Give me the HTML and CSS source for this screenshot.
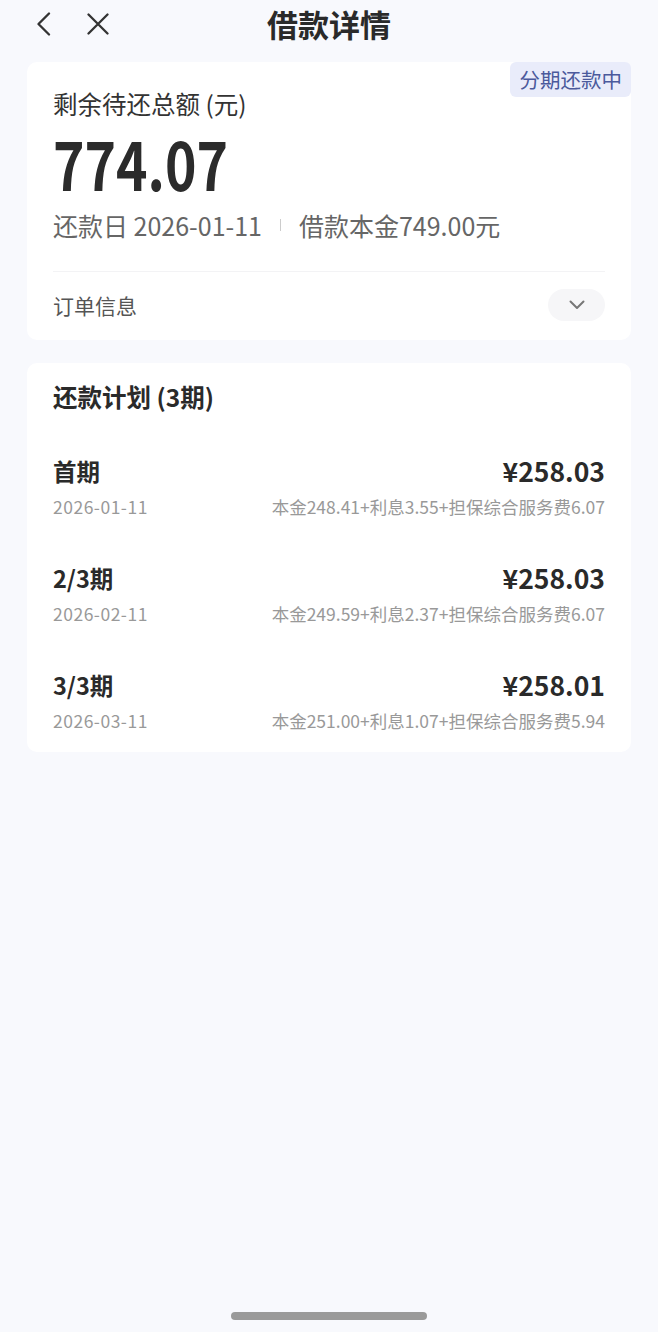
FILE: index.html
```html
<!DOCTYPE html>
<html lang="zh-CN">
<head>
  <meta charset="UTF-8" />
  <meta name="viewport" content="width=device-width, initial-scale=1.0"/>
  <title>借款详情</title>
  <link rel="stylesheet" href="styles.css">
</head>
<body>

  <!-- 顶部导航 -->
  <div class="nav">
    <div class="nav-left">
      <svg width="16" height="24" viewBox="0 0 16 24">
        <path d="M13 1.5 L2.5 12 L13 22.5" fill="none" stroke="#333" stroke-width="2.3" stroke-linecap="round" stroke-linejoin="round"/>
      </svg>
      <svg width="22" height="22" viewBox="0 0 22 22">
        <path d="M1.5 1.5 L20.5 20.5 M20.5 1.5 L1.5 20.5" fill="none" stroke="#333" stroke-width="2.3" stroke-linecap="round"/>
      </svg>
    </div>
    <h1 class="nav-title">借款详情</h1>
    <div></div>
  </div>

  <!-- 待还总额 -->
  <div class="card summary">
    <span class="badge">分期还款中</span>
    <div class="label">剩余待还总额 (元)</div>
    <div class="amount"><span>774.07</span></div>
    <div class="info">
      <span>还款日 2026-01-11</span>
      <span class="sep"></span>
      <span>借款本金749.00元</span>
    </div>
    <div class="divider"></div>
    <div class="order-row">
      <span>订单信息</span>
      <span class="expand">
        <svg width="18" height="12" viewBox="0 0 18 12">
          <path d="M2.5 2.5 L9 9 L15.5 2.5" fill="none" stroke="#777" stroke-width="2" stroke-linecap="round" stroke-linejoin="round"/>
        </svg>
      </span>
    </div>
  </div>

  <!-- 还款计划 -->
  <div class="card plan">
    <div class="plan-title">还款计划 (3期)</div>

    <div class="plan-row">
      <div class="row-top">
        <span class="term">首期</span>
        <span class="price">¥258.03</span>
      </div>
      <div class="row-bottom">
        <span class="date">2026-01-11</span>
        <span>本金248.41+利息3.55+担保综合服务费6.07</span>
      </div>
    </div>

    <div class="plan-row">
      <div class="row-top">
        <span class="term">2/3期</span>
        <span class="price">¥258.03</span>
      </div>
      <div class="row-bottom">
        <span class="date">2026-02-11</span>
        <span>本金249.59+利息2.37+担保综合服务费6.07</span>
      </div>
    </div>

    <div class="plan-row">
      <div class="row-top">
        <span class="term">3/3期</span>
        <span class="price">¥258.01</span>
      </div>
      <div class="row-bottom">
        <span class="date">2026-03-11</span>
        <span>本金251.00+利息1.07+担保综合服务费5.94</span>
      </div>
    </div>
  </div>

  <div class="home-bar"></div>

</body>
</html>
```

FILE: styles.css
```css
* {
  box-sizing: border-box;
  padding: 0;
  margin: 0;
  font-family: "Noto Sans CJK SC", "Noto Sans", sans-serif;
}

body {
  background: #f8f9fd;
  min-height: 100vh;
  display: flex;
  flex-direction: column;
  color: #333;
}

.nav {
  height: 48px;
  display: grid;
  grid-template-columns: 1fr auto 1fr;
  align-items: center;
}

.nav-left {
  display: flex;
  align-items: center;
  gap: 35px;
  padding-left: 36px;
}

.nav-left svg {
  display: block;
}

.nav-title {
  font-size: 31px;
  font-weight: bold;
  color: #2a2a2a;
  line-height: 48px;
}

.card {
  background: #fff;
  border-radius: 10px;
  margin: 0 27px;
  padding: 0 26px;
  position: relative;
}

.summary {
  margin-top: 14px;
  padding-top: 27px;
  padding-bottom: 3px;
}

.badge {
  position: absolute;
  top: 0;
  right: 0;
  background: #e9ecfa;
  color: #4b5a9c;
  font-size: 20.5px;
  line-height: 35px;
  padding: 0 9px 0 10px;
  border-radius: 6px;
}

.label {
  font-size: 24.5px;
  line-height: 30px;
  color: #333;
}

.amount {
  margin-top: 8px;
  height: 70px;
  font-family: Roboto, "Noto Sans", sans-serif;
  font-size: 66px;
  font-weight: bold;
  line-height: 70px;
  color: #2b2b2b;
}

.amount span {
  display: inline-block;
  transform: scaleX(0.81);
  transform-origin: left center;
}

.info {
  margin-top: 13px;
  font-size: 25px;
  line-height: 30px;
  color: #666;
  display: flex;
  align-items: center;
  gap: 18px;
}

.sep {
  width: 1px;
  height: 12px;
  background: #ccc;
}

.divider {
  margin-top: 31px;
  height: 1px;
  background: #f3f3f5;
}

.order-row {
  height: 65px;
  display: flex;
  justify-content: space-between;
  align-items: center;
  font-size: 21px;
  color: #555;
}

.expand {
  width: 57px;
  height: 32px;
  border-radius: 16px;
  background: #f6f6f8;
  display: flex;
  justify-content: center;
  align-items: center;
}

.plan {
  margin-top: 23px;
  padding-top: 20px;
  padding-bottom: 20px;
}

.plan-title {
  font-size: 24.5px;
  font-weight: bold;
  line-height: 28px;
  color: #2a2a2a;
}

.plan-row {
  margin-top: 45px;
}

.row-top {
  display: flex;
  justify-content: space-between;
  align-items: center;
  line-height: 30px;
}

.term {
  font-size: 23.5px;
  font-weight: bold;
  color: #2a2a2a;
}

.price {
  font-size: 26.5px;
  font-weight: bold;
  color: #2a2a2a;
}

.row-bottom {
  margin-top: 10px;
  display: flex;
  justify-content: space-between;
  font-size: 17.5px;
  line-height: 22px;
  color: #999;
}

.date {
  letter-spacing: 0.5px;
}

.home-bar {
  margin: auto auto 12px;
  width: 196px;
  height: 8px;
  border-radius: 4px;
  background: #9a9a9a;
}
```
